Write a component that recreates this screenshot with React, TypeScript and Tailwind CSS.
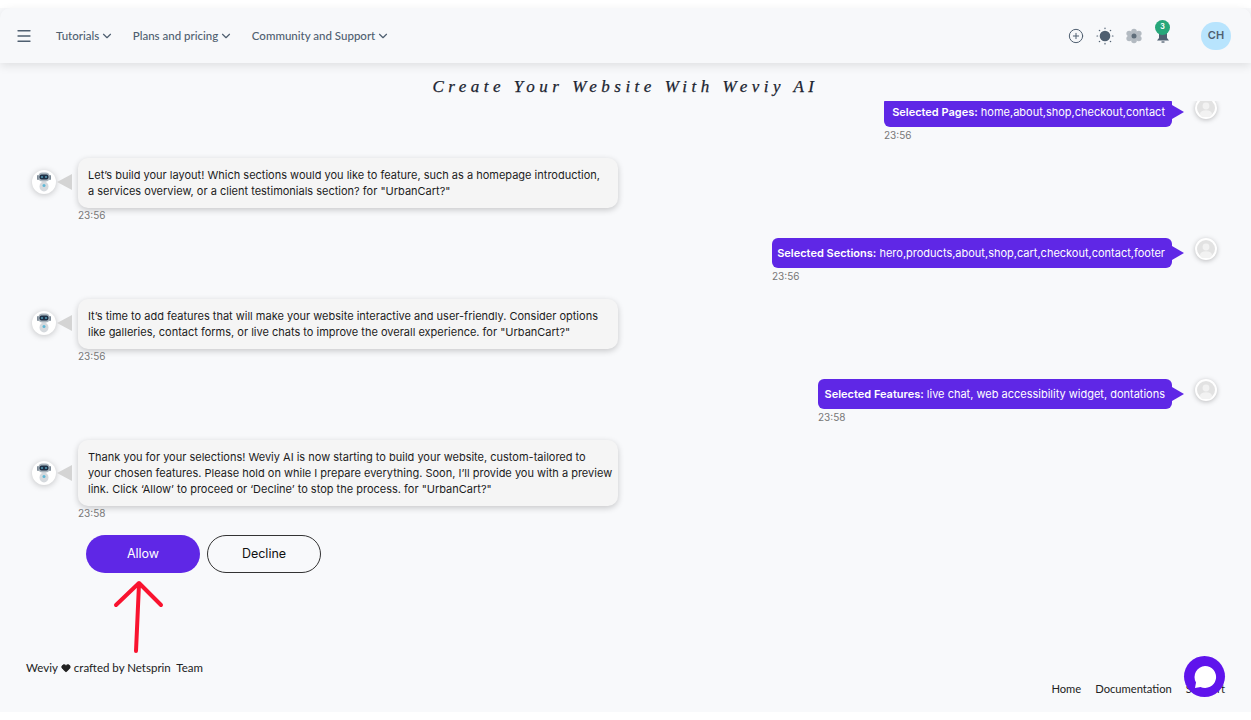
import { ChevronDown, Heart, Menu, PlusCircle } from 'lucide-react';

function Robot() {
  return (
    <div className="flex h-6 w-6 items-center justify-center rounded-full bg-white shadow-[0_1px_6px_rgba(0,0,0,0.22)]">
      <svg width="18" height="20" viewBox="0 0 18 20">
        <ellipse cx="9" cy="14.500" rx="4.500" ry="5" fill="#d5d9dd" />
        <circle cx="9" cy="13.500" r="1.500" fill="#5fb8d6" />
        <rect x="2" y="3" width="2" height="5" rx="1" fill="#7d8a96" />
        <rect x="14" y="3" width="2" height="5" rx="1" fill="#7d8a96" />
        <rect x="3.500" y="0.500" width="11" height="9" rx="4" fill="#a9b4bd" />
        <rect x="4.500" y="2.500" width="9" height="5" rx="2" fill="#1f3147" />
        <rect x="6" y="4.500" width="2" height="1" fill="#6fd0ee" />
        <rect x="10" y="4.500" width="2" height="1" fill="#6fd0ee" />
      </svg>
    </div>
  );
}

function BotMessage({ lines, time, top, avatarTop }: { lines: string[]; time: string; top: string; avatarTop: string }) {
  return (
    <div className={`flex ${top}`}>
      <div className={`ml-[32px] mr-[6px] flex items-center self-start ${avatarTop}`}>
        <Robot />
        <div className="ml-[1px] h-0 w-0 border-y-[8px] border-r-[15px] border-y-transparent border-r-[#d4d4d4]" />
      </div>
      <div>
        <div className="w-[540px] rounded-[10px] bg-[#f5f5f5] py-[9px] pl-[10px] pr-[8px] text-[11px] leading-[16px] text-[#1c1c1c] shadow-[0_2px_6px_rgba(0,0,0,0.2)]">
          {lines.map((l) => (
            <div key={l} className="whitespace-nowrap">{l}</div>
          ))}
        </div>
        <div className="mt-[1px] text-[10px] leading-[12px] text-[#777]">{time}</div>
      </div>
    </div>
  );
}

function UserMessage({ label, text, time, width, top }: { label: string; text: string; time: string; width: string; top: string }) {
  return (
    <div className={`flex justify-end pr-[34px] ${top}`}>
      <div>
        <div className="flex items-center">
          <div className={`flex h-[30px] items-center justify-end whitespace-nowrap rounded-[6px] bg-[#5f27e6] pr-[7px] text-[11px] text-white ${width}`}>
            <span className="font-semibold">{label}</span>&nbsp;{text}
          </div>
          <div className="h-0 w-0 border-y-[7px] border-l-[12px] border-y-transparent border-l-[#5f27e6]" />
        </div>
        <div className="mt-[2px] text-[10px] leading-[12px] text-[#777]">{time}</div>
      </div>
      <div className="ml-[11px] flex h-[22px] w-[22px] items-center justify-center overflow-hidden rounded-full bg-white shadow-[0_1px_5px_rgba(0,0,0,0.25)]">
        <svg width="18" height="18" viewBox="0 0 18 18">
          <circle cx="9" cy="9" r="9" fill="#e2e2e2" />
          <circle cx="9" cy="7" r="3.400" fill="#f2f2f2" />
          <ellipse cx="9" cy="15" rx="6" ry="3.800" fill="#f2f2f2" />
        </svg>
      </div>
    </div>
  );
}

export default function App() {
  return (
    <div className="relative h-[720px] w-[1251px] overflow-hidden bg-white pt-2">
      <div className="flex h-[704px] flex-col bg-[#f8f9fb] font-['Inter',sans-serif]">
        <header className="z-10 flex h-[55px] shrink-0 items-center rounded-t-[10px] bg-[#f7f8fa] pl-[15px] pr-[20px] text-[#4f5f70] shadow-[0_3px_10px_rgba(0,0,0,0.1)]">
          <Menu size={18} strokeWidth={1.700} />
          <nav className="ml-[23px] flex items-center gap-[18.500px] font-['Lato',sans-serif] text-[11.500px] font-medium">
            <span className="flex items-center gap-[1px]">Tutorials <ChevronDown size={14} /></span>
            <span className="flex items-center gap-[1px]">Plans and pricing <ChevronDown size={14} /></span>
            <span className="flex items-center gap-[1px]">Community and Support <ChevronDown size={14} /></span>
          </nav>
          <div className="ml-auto flex items-center">
            <PlusCircle size={16} strokeWidth={1.500} />
            <svg className="ml-[12px]" width="18" height="18" viewBox="0 0 18 18" fill="#4f5f70">
              <circle cx="9" cy="9" r="5.300" />
              <g stroke="#4f5f70" strokeWidth="1.200" strokeLinecap="round">
                <path d="M9 1v.6M9 16.400v.6M1 9h.6M16.400 9h.6M3.300 3.300l.4.4M14.300 14.300l.4.4M3.300 14.700l.4-.4M14.300 3.700l.4-.4" />
              </g>
            </svg>
            <svg className="ml-[12px]" width="16" height="16" viewBox="0 0 16 16">
              <g fill="#b3bac1">
                <circle cx="8" cy="3.500" r="2.800" />
                <circle cx="8" cy="12.500" r="2.800" />
                <circle cx="3.200" cy="5.500" r="2.800" />
                <circle cx="12.800" cy="5.500" r="2.800" />
                <circle cx="3.200" cy="10.500" r="2.800" />
                <circle cx="12.800" cy="10.500" r="2.800" />
                <circle cx="8" cy="8" r="4" />
              </g>
              <circle cx="8" cy="8" r="2.500" fill="#5f6d7a" />
            </svg>
            <div className="relative ml-[14px] h-[16px] w-[14px]">
              <svg width="14" height="17" viewBox="0 0 14 17" className="mt-[-1px]" fill="#4f5f70">
                <path d="M3 7a4 4 0 0 1 8 0v4l2 2.500H1L3 11z" />
                <path d="M5.500 14h3v2h-3z" fill="#8a95a0" />
              </svg>
              <span className="absolute left-[-1px] top-[-8px] flex h-[15px] w-[15px] items-center justify-center rounded-full bg-[#27a77a] text-[7px] font-bold text-white">3</span>
            </div>
            <div className="ml-[31px] flex h-[28px] w-[30px] items-center justify-center rounded-full bg-[#b8e4fd] text-[11px] font-semibold text-[#4f5f70]">CH</div>
          </div>
        </header>

        <h1 className="mt-[14px] h-[19px] shrink-0 text-center font-['Liberation_Serif',serif] text-[17px] italic leading-[19px] tracking-[4.500px] text-[#1b2430] [-webkit-text-stroke:0.25px_#1b2430]">
          Create Your Website With Weviy AI
        </h1>

        <main className="mt-[5px] h-[551px] shrink-0 overflow-hidden">
          <UserMessage label="Selected Pages:" text="home,about,shop,checkout,contact" time="23:56" width="w-[288px]" top="mt-[-4px]" />
          <BotMessage top="mt-[17px]" avatarTop="mt-[12px]" time="23:56" lines={['Let’s build your layout! Which sections would you like to feature, such as a homepage introduction,', 'a services overview, or a client testimonials section? for "UrbanCart?"']} />
          <UserMessage label="Selected Sections:" text="hero,products,about,shop,cart,checkout,contact,footer" time="23:56" width="w-[400px]" top="mt-[17px]" />
          <BotMessage top="mt-[17px]" avatarTop="mt-[12px]" time="23:56" lines={['It’s time to add features that will make your website interactive and user-friendly. Consider options', 'like galleries, contact forms, or live chats to improve the overall experience. for "UrbanCart?"']} />
          <UserMessage label="Selected Features:" text="live chat, web accessibility widget, dontations" time="23:58" width="w-[354px]" top="mt-[17px]" />
          <BotMessage top="mt-[17px]" avatarTop="mt-[21px]" time="23:58" lines={['Thank you for your selections! Weviy AI is now starting to build your website, custom-tailored to', 'your chosen features. Please hold on while I prepare everything. Soon, I’ll provide you with a preview', 'link. Click ‘Allow’ to proceed or ‘Decline’ to stop the process. for "UrbanCart?"']} />
          <div className="ml-[86px] mt-[16px] flex gap-[7px] text-[12.500px]">
            <button className="h-[38px] w-[114px] rounded-full bg-[#5f27e6] text-white">Allow</button>
            <button className="h-[38px] w-[114px] rounded-full border border-[#333] text-[#111]">Decline</button>
          </div>
        </main>

        <footer className="mt-[9px] flex h-[37px] justify-between px-[26px] font-['Lato',sans-serif] text-[#222]">
          <div className="flex items-center self-start text-[11.500px] leading-[14px]">
            Weviy <Heart size={10} fill="#222" className="mx-[3px]" /> crafted by Netsprin &nbsp;Team
          </div>
          <div className="flex items-end gap-[14px] text-[11.200px]">
            <span>Home</span>
            <span>Documentation</span>
            <span>Support</span>
          </div>
        </footer>
      </div>

      <svg className="absolute left-[108px] top-[576px]" width="60" height="82" viewBox="0 0 60 82" fill="none" stroke="#f9132f" strokeWidth="4" strokeLinecap="round" strokeLinejoin="round">
        <path d="M28 75 L31 8 M8 29 L31 7 L53 29" />
      </svg>

      <div className="absolute left-[1184px] top-[656px] flex h-[41px] w-[41px] items-center justify-center rounded-full bg-[#5f14ec]">
        <svg width="26" height="26" viewBox="0 0 26 26">
          <path d="M13 2a11 11 0 1 1-4.500 21L3 24l1-5.500A11 11 0 0 1 13 2z" fill="white" />
        </svg>
      </div>
    </div>
  );
}
